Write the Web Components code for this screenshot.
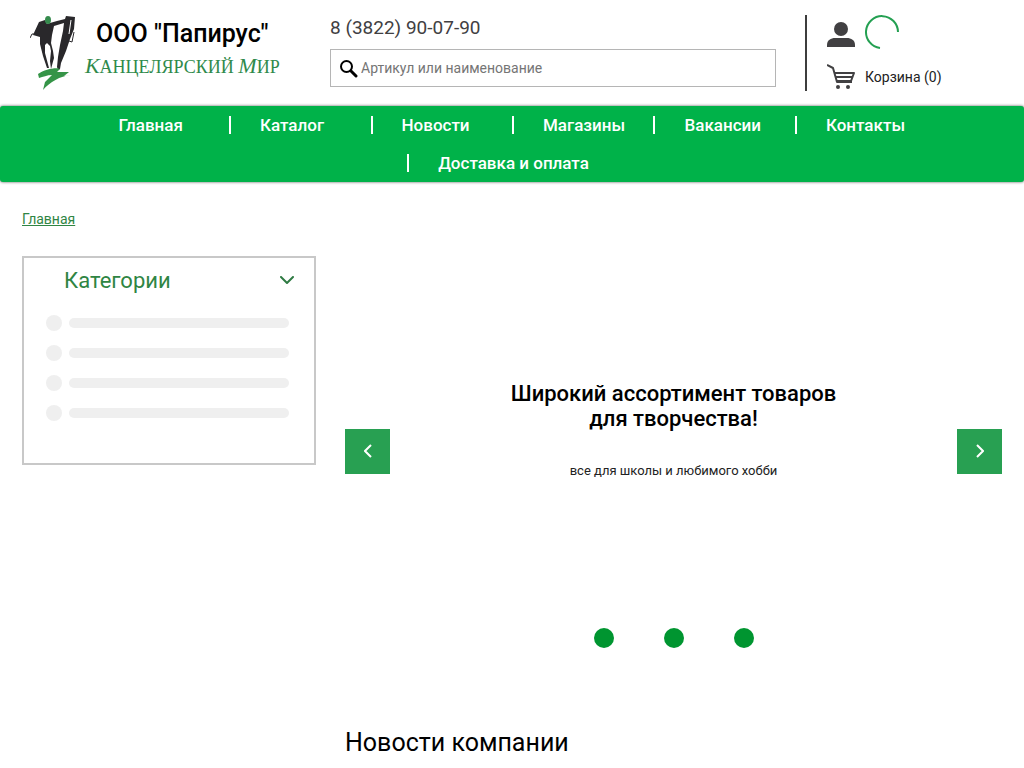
<!DOCTYPE html>
<html lang="ru">
<head>
<meta charset="utf-8">
<meta name="viewport" content="width=device-width, initial-scale=1">
<title>ООО "Папирус"</title>
<style>
  body { margin: 0; background: #fff; color: #000; font: 14px/20px Roboto, "Liberation Sans", sans-serif; }
  .columns { display: grid; grid-template-columns: 294px minmax(0, 1fr); column-gap: 29px; align-items: start; padding: 0 22px; }
</style>
</head>
<body>
<site-header></site-header>
<site-nav>
  <nav-item href="#home">Главная</nav-item>
  <nav-item href="#catalog">Каталог</nav-item>
  <nav-item href="#news">Новости</nav-item>
  <nav-item href="#shops">Магазины</nav-item>
  <nav-item href="#jobs">Вакансии</nav-item>
  <nav-item href="#contacts">Контакты</nav-item>
  <nav-item href="#delivery">Доставка и оплата</nav-item>
</site-nav>
<bread-crumbs>Главная</bread-crumbs>
<div class="columns">
  <category-panel>Категории</category-panel>
  <main>
    <promo-slider>
      <span slot="title">Широкий ассортимент товаров для творчества!</span>
      <span slot="text">все для школы и любимого хобби</span>
    </promo-slider>
    <section-title>Новости компании</section-title>
  </main>
</div>
<script>
const define = (name, html) => {
  const template = document.createElement('template');
  template.innerHTML = html;
  customElements.define(name, class extends HTMLElement {
    constructor() {
      super();
      this.attachShadow({ mode: 'open' }).append(template.content.cloneNode(true));
    }
    connectedCallback() {
      const link = this.shadowRoot.querySelector('a[data-link]');
      if (link) link.href = this.getAttribute('href') || '#';
    }
  });
};

define('site-logo', `
<style>
  :host { display: block; }
  a { display: flex; gap: 9px; color: #000; text-decoration: none; }
  svg { flex: none; display: block; }
  .names { display: flex; flex-direction: column; align-items: center; white-space: nowrap; padding-top: 7px; }
  strong { font-size: 25px; line-height: 24px; font-weight: 500; }
  .brand { color: #2f8a4b; font: 18px/40px "Liberation Serif", serif; text-transform: uppercase; }
  i { font-size: 22px; font-family: "Liberation Serif", serif; }
</style>
<a href="#home">
  <svg width="46" height="76" viewBox="0 0 46 76" aria-hidden="true">
    <path fill="#29282b" d="M3 20 9 7 15 5 17 9 20 8 27 6 35 4 36 1 45 2 44 14 40 24 36 36 31 48 30 54 28 55 27 52 28 42 30 30 33 16 34 8 24 11 22 20 21 28 23 36 24 43 21 54 20 46 21 36 20 31 17 28 15 30 15 38 19 53 17 53 13 41 10 29 10 22Z"/>
    <path fill="none" stroke="#fff" d="M41 5 39 19"/>
    <path fill="none" stroke="#29282b" d="M6 19 2 19 0 23M44 17 42 27 39 26"/>
    <ellipse cx="18" cy="5" rx="3" ry="4" fill="#358b4d"/>
    <path fill="#359447" d="M8 59C15 54 27 52 30 54L27 57 39 57 34 61 41 60C30 61 20 67 13 75L15 67 22 60C17 60 13 62 9 63Z"/>
  </svg>
  <span class="names">
    <strong>ООО "Папирус"</strong>
    <span class="brand"><i>К</i>анцелярский <i>М</i>ир</span>
  </span>
</a>`);

define('search-box', `
<style>
  :host { display: block; }
  label { display: flex; align-items: center; gap: 3px; box-sizing: border-box; height: 38px; padding: 0 8px; border: 1px solid #b5b5b5; background: #fff; }
  svg { flex: none; }
  input { flex: 1; min-width: 0; border: 0; padding: 0; outline: 0; background: none; font: 14px/20px Roboto, sans-serif; color: #333; }
  input::placeholder { color: #757575; opacity: 1; }
</style>
<label>
  <svg width="19" height="19" viewBox="0 0 19 19" fill="none" stroke="#000" aria-hidden="true"><circle cx="7.500" cy="7.500" r="5.500" stroke-width="2"/><path d="m12 12 5 5" stroke-width="3" stroke-linecap="round"/></svg>
  <input type="search" placeholder="Артикул или наименование" aria-label="Артикул или наименование">
</label>`);

define('user-menu', `
<style>
  :host { display: grid; grid-template-columns: 28px auto; grid-template-rows: 34px 25px; align-content: start; justify-content: start; column-gap: 10px; row-gap: 15px; align-items: center; box-sizing: border-box; height: 76px; padding-left: 20px; border-left: 2px solid #3d3d3d; }
  a { color: #222; text-decoration: none; }
  .icon:first-of-type { align-self: end; }
  svg { display: block; }
</style>
<a class="icon" href="#account" aria-label="Личный кабинет"><svg width="28" height="27" viewBox="0 0 28 27" fill="#414042"><circle cx="14" cy="7" r="7"/><path d="M0 25v-2c0-5 4-7 8-7h12c4 0 8 2 8 7v2z"/></svg></a>
<svg width="34" height="34" viewBox="0 0 34 34" fill="none" stroke="#24a052" stroke-width="2" role="img" aria-label="Загрузка"><path d="M33 17A16 16 0 1 0 15 33"/></svg>
<a class="icon" href="#cart" aria-label="Корзина"><svg width="28" height="25" viewBox="0 0 28 25" fill="none" stroke="#414042" stroke-width="2" stroke-linejoin="round"><path d="M0 1l6 3 4 14h15M7 9h20l-3 8H9M8 13h18"/><g fill="#414042" stroke="none"><circle cx="11" cy="23" r="2"/><circle cx="21" cy="23" r="2"/></g></svg></a>
<a href="#cart">Корзина (0)</a>`);

define('site-header', `
<style>
  :host { display: block; }
  header { display: grid; grid-template-columns: 271px minmax(0, 1fr) 197px; column-gap: 29px; padding: 15px 22px 15px 30px; }
  site-logo { min-width: 0; }
  .middle { display: flex; flex-direction: column; gap: 8px; }
  .phone { color: #414042; font-size: 19px; line-height: 26px; text-decoration: none; }
</style>
<header>
  <site-logo></site-logo>
  <div class="middle">
    <a class="phone" href="tel:+73822900790">8 (3822) 90-07-90</a>
    <search-box></search-box>
  </div>
  <user-menu></user-menu>
</header>`);

define('site-nav', `
<style>
  :host { display: block; background: #00b249; border-radius: 3px; box-shadow: 0 0 3px #000a; }
  nav { display: flex; flex-wrap: wrap; justify-content: center; max-width: 849px; margin: 0 auto; }
</style>
<nav aria-label="Меню"><slot></slot></nav>`);

define('nav-item', `
<style>
  :host { display: block; box-sizing: border-box; min-width: calc(100% / 6); padding: 10px 0; }
  a { display: block; padding: 0 28px 0 29px; border-left: 2px solid #fff; color: #fff; font-size: 17px; line-height: 18px; font-weight: 500; text-decoration: none; white-space: nowrap; }
  :host(:first-child) a { border-color: transparent; }
</style>
<a data-link><slot></slot></a>`);

define('bread-crumbs', `
<style>
  :host { display: block; padding: 27px 22px; }
  a { color: #2f8543; }
</style>
<nav aria-label="Путь"><a href="#home"><slot></slot></a></nav>`);

define('category-panel', `
<style>
  :host { display: block; box-sizing: border-box; border: 2px solid #c8c8c8; padding: 8px 20px 42px; }
  button { display: flex; width: 100%; align-items: center; justify-content: space-between; border: 0; background: none; padding: 0 0 0 20px; color: #2f8543; font: 22px/30px Roboto, sans-serif; }
  ul { list-style: none; margin: 0; padding: 19px 5px 0 2px; display: grid; gap: 14px; }
  li { display: flex; align-items: center; gap: 7px; }
  li::before { content: ""; width: 16px; height: 16px; border-radius: 50%; background: #efefef; }
  li::after { content: ""; flex: 1; height: 10px; border-radius: 5px; background: #efefef; }
</style>
<button type="button" aria-expanded="true"><slot></slot>
  <svg width="14" height="10" viewBox="0 0 14 10" fill="none" stroke="#2f7b43" stroke-width="2" stroke-linecap="round" stroke-linejoin="round" aria-hidden="true"><path d="m1 1 6 6 6-6"/></svg>
</button>
<ul aria-hidden="true"><li></li><li></li><li></li><li></li></ul>`);

define('promo-slider', `
<style>
  :host { display: block; }
  .slide { display: grid; grid-template-columns: 45px minmax(0, 1fr) 45px; align-items: center; justify-items: center; box-sizing: border-box; min-height: 372px; padding-top: 18px; }
  .step { width: 45px; height: 45px; padding: 0; border: 0; background: #28a052; display: grid; place-items: center; }
  .copy { display: grid; gap: 30px; justify-items: center; text-align: center; padding-bottom: 41px; }
  h2 { margin: 0; max-width: 350px; font-size: 22px; line-height: 25px; font-weight: 500; }
  p { margin: 0; font-size: 13px; line-height: 20px; color: #222; }
  .dots { display: flex; justify-content: center; gap: 50px; }
  .dots button { width: 20px; height: 20px; padding: 0; border: 0; border-radius: 50%; background: #009530; }
</style>
<div class="slide">
  <button class="step" type="button" aria-label="Назад"><svg width="8" height="14" viewBox="0 0 8 14" fill="none" stroke="#fff" stroke-width="2"><path d="M7 1 1 7l6 6"/></svg></button>
  <div class="copy"><h2><slot name="title"></slot></h2><p><slot name="text"></slot></p></div>
  <button class="step" type="button" aria-label="Вперёд"><svg width="8" height="14" viewBox="0 0 8 14" fill="none" stroke="#fff" stroke-width="2"><path d="m1 1 6 6-6 6"/></svg></button>
</div>
<div class="dots"><button type="button" aria-label="Слайд 1"></button><button type="button" aria-label="Слайд 2"></button><button type="button" aria-label="Слайд 3"></button></div>`);

define('section-title', `
<style>
  :host { display: block; padding-top: 80px; }
  h2 { margin: 0; font-size: 25px; line-height: 30px; font-weight: 400; }
</style>
<h2><slot></slot></h2>`);
</script>
</body>
</html>
